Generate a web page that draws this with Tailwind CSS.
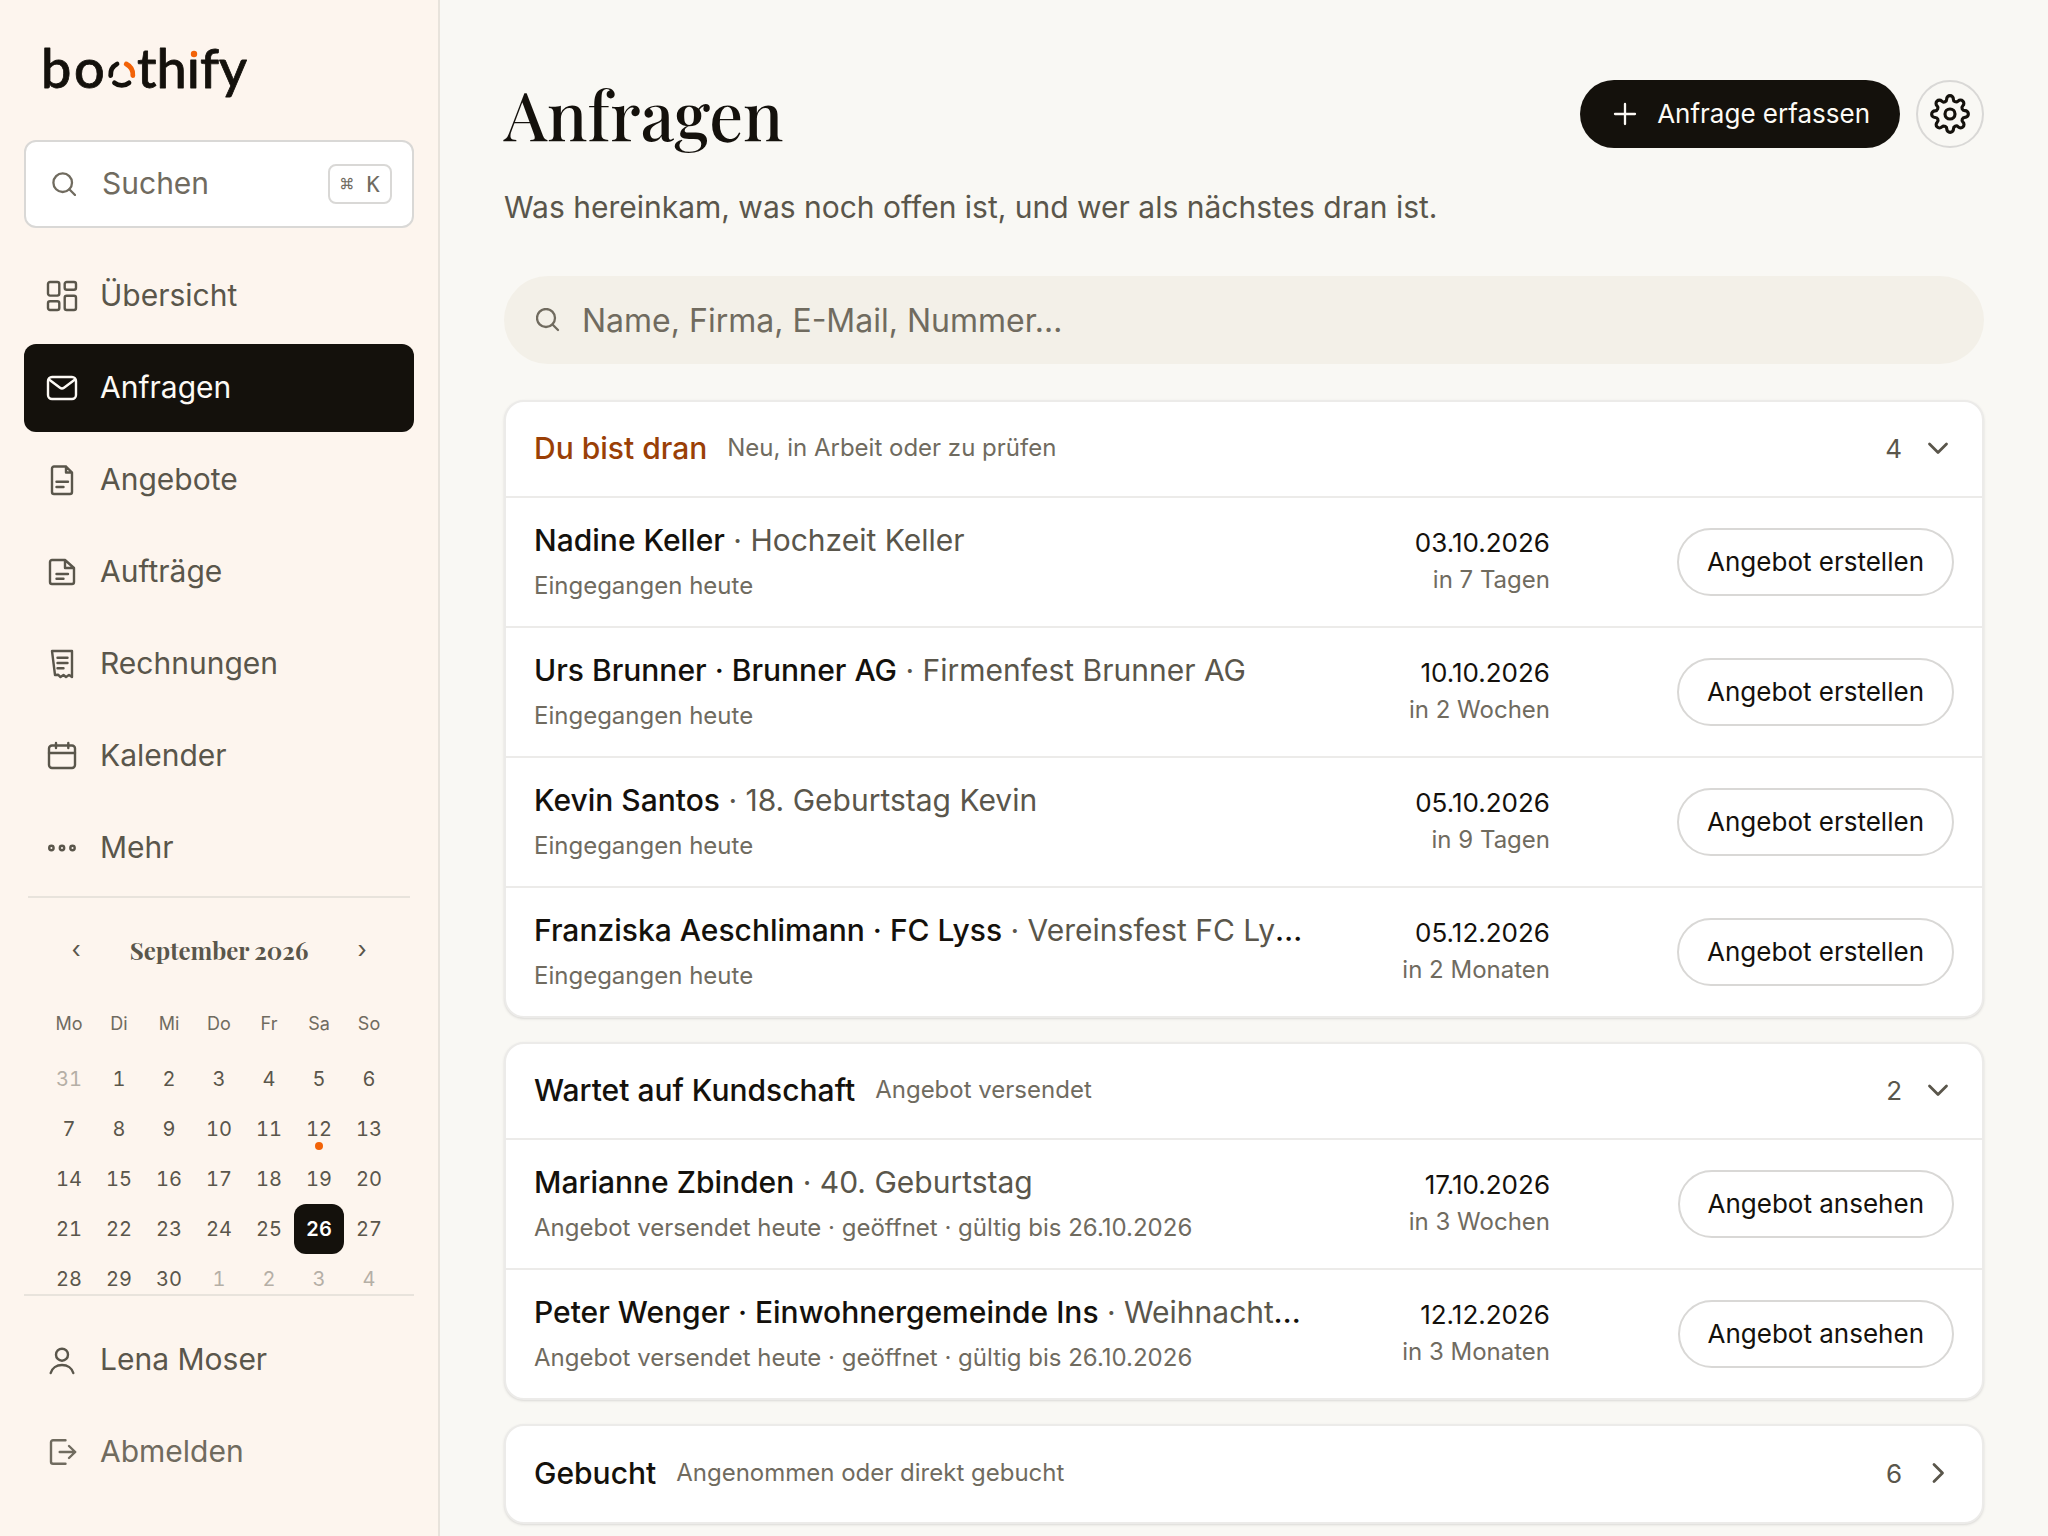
<!DOCTYPE html>
<html lang="de">
<head>
  <meta charset="UTF-8" />
  <meta name="viewport" content="width=device-width, initial-scale=1.0"/>
  <title>Anfragen – boothify</title>
  <script src="https://cdn.jsdelivr.net/npm/@tailwindcss/browser@4"></script>
</head>
<body class="flex h-screen overflow-hidden bg-[#f9f8f4] font-[Inter,sans-serif] text-[#14110c]">

  <!-- Sidebar -->
  <aside class="flex h-screen w-[440px] shrink-0 flex-col border-r-2 border-[#e8e3dc] bg-[#fdf5ee] px-6 text-[30px] text-[#5a564b]">
    <div class="flex min-h-0 flex-1 flex-col overflow-hidden">
      <a href="#" aria-label="boothify" class="block h-[140px] shrink-0 pt-8 pl-[17px]">
        <svg class="h-[72px] w-[220px]" viewBox="0 0 220 72" fill="none">
          <g class="font-[Lato,sans-serif] text-[54px] font-medium" fill="#14110c" stroke="#14110c" stroke-width="0.8" stroke-linejoin="round">
            <text x="0" y="56">b</text>
            <text x="33" y="56">o</text>
            <text x="96" y="56">thıfy</text>
          </g>
          <!-- Shutter ring -->
          <g stroke-width="4.8" stroke-linecap="round">
            <path stroke="#14110c" d="M76 32a12 12 0 0 0-6.300 11.500"/>
            <path stroke="#14110c" d="M73.500 50.800a11.500 11.500 0 0 0 14.500 0"/>
            <path stroke="#f26207" d="M85.300 32a12 12 0 0 1 6.500 11.500"/>
          </g>
          <circle cx="153" cy="22" r="3.200" fill="#f26207"/>
        </svg>
      </a>

      <button type="button" class="flex h-[88px] shrink-0 items-center rounded-xl border-2 border-[#d9d8d6] bg-white pr-5 pl-[26px] text-[#706b5f]">
        <svg class="size-6 shrink-0" viewBox="0 0 24 24" fill="none" stroke="currentColor" stroke-width="2.300" stroke-linecap="round"><circle cx="10.700" cy="10.700" r="9.300"/><path d="m17.300 17.300 5.700 5.700"/></svg>
        <span class="ml-[26px] pb-0.5">Suchen</span>
        <kbd class="ml-auto flex h-10 w-16 items-center justify-center rounded-lg border-2 border-[#d9d8d6] font-['DejaVu_Sans_Mono',monospace] text-[22px]">⌘ K</kbd>
      </button>

      <nav class="mt-6 flex shrink-0 flex-col gap-1">
        <a href="#" class="flex h-[88px] items-center gap-[22px] rounded-xl pl-[22px]">
          <svg class="size-8" viewBox="0 0 32 32" fill="none" stroke="currentColor" stroke-width="2.400"><rect x="2" y="2" width="11.300" height="13.600" rx="2"/><rect x="18.700" y="2" width="11.300" height="7.700" rx="2"/><rect x="2" y="21.300" width="11.300" height="8.700" rx="2"/><rect x="18.700" y="15.700" width="11.300" height="14.300" rx="2"/></svg>
          <span class="pb-0.5">Übersicht</span>
        </a>
        <a href="#" aria-current="page" class="flex h-[88px] items-center gap-[22px] rounded-xl bg-[#14110c] pl-[22px] text-[#fdfaf5]">
          <svg class="size-8" viewBox="0 0 32 32" fill="none" stroke="currentColor" stroke-width="2.400" stroke-linecap="round"><rect x="2" y="5" width="28" height="22" rx="4"/><path d="M3 7.500 14 15.700q2 1.500 4 0L29 7.500"/></svg>
          <span class="pb-0.5">Anfragen</span>
        </a>
        <a href="#" class="flex h-[88px] items-center gap-[22px] rounded-xl pl-[22px]">
          <svg class="size-8" viewBox="0 0 32 32" fill="none" stroke="currentColor" stroke-width="2.400" stroke-linecap="round" stroke-linejoin="round"><path d="M20 2.500H8a2 2 0 0 0-2 2V28a2 2 0 0 0 2 2h16a2 2 0 0 0 2-2V8.500zM20 2.500v6h6M10.500 17.700h11.500M10.500 23h7"/></svg>
          <span class="pb-0.5">Angebote</span>
        </a>
        <a href="#" class="flex h-[88px] items-center gap-[22px] rounded-xl pl-[22px]">
          <svg class="size-8" viewBox="0 0 32 32" fill="none" stroke="currentColor" stroke-width="2.400" stroke-linecap="round" stroke-linejoin="round"><path d="M19 4H6a2 2 0 0 0-2 2v20a2 2 0 0 0 2 2h20a2 2 0 0 0 2-2V12zM19 4v8h9M10.500 18h11.500M10.500 22.700h7"/></svg>
          <span class="pb-0.5">Aufträge</span>
        </a>
        <a href="#" class="flex h-[88px] items-center gap-[22px] rounded-xl pl-[22px]">
          <svg class="size-8" viewBox="0 0 32 32" fill="none" stroke="currentColor" stroke-width="2.400" stroke-linecap="round" stroke-linejoin="round"><path d="M6 3h20v26l-3-2-3 2-2.500-2-3 2-2.500-2.300L9 27zM11.500 9.700h10M11.500 15h10M11.500 20.300h6"/></svg>
          <span class="pb-0.5">Rechnungen</span>
        </a>
        <a href="#" class="flex h-[88px] items-center gap-[22px] rounded-xl pl-[22px]">
          <svg class="size-8" viewBox="0 0 32 32" fill="none" stroke="currentColor" stroke-width="2.400" stroke-linecap="round"><rect x="3" y="5.500" width="26" height="22.500" rx="3"/><path d="M3 13h26M10 3v5M22.300 3v5"/></svg>
          <span class="pb-0.5">Kalender</span>
        </a>
        <button type="button" class="flex h-[88px] items-center gap-[22px] rounded-xl pl-[22px]">
          <svg class="size-8" viewBox="0 0 32 32" fill="none" stroke="currentColor" stroke-width="2.400"><circle cx="5.400" cy="16" r="2.200"/><circle cx="16" cy="16" r="2.200"/><circle cx="26.500" cy="16" r="2.200"/></svg>
          <span class="pb-0.5">Mehr</span>
        </button>
      </nav>

      <!-- Mini calendar -->
      <div class="mx-1 mt-1 shrink-0 border-t-2 border-[#e8e3dc] px-4 pt-6">
        <div class="flex h-14 items-center justify-between px-5">
          <button type="button" aria-label="Vorheriger Monat" class="w-6 text-2xl">‹</button>
          <h2 class="font-['Playfair_Display','Liberation_Serif',serif] text-2xl font-bold">September 2026</h2>
          <button type="button" aria-label="Nächster Monat" class="w-6 text-2xl">›</button>
        </div>
        <table class="mt-4 w-[350px] table-fixed text-center text-xl tabular-nums">
          <thead>
            <tr class="h-[60px] text-lg text-[#706b5f]">
              <th class="font-normal">Mo</th><th class="font-normal">Di</th><th class="font-normal">Mi</th><th class="font-normal">Do</th><th class="font-normal">Fr</th><th class="font-normal">Sa</th><th class="font-normal">So</th>
            </tr>
          </thead>
          <tbody id="days"></tbody>
        </table>
      </div>
    </div>

    <div class="flex shrink-0 flex-col gap-1 border-t-2 border-[#e8e3dc] pt-5 pb-10">
      <a href="#" class="flex h-[88px] items-center gap-[22px] pl-[22px]">
        <svg class="size-8" viewBox="0 0 32 32" fill="none" stroke="currentColor" stroke-width="2.400" stroke-linecap="round"><circle cx="16" cy="10.700" r="6"/><path d="M4.700 29C6 24 10.500 21 16 21s10 3 11.300 8"/></svg>
        <span class="pb-0.5">Lena Moser</span>
      </a>
      <button type="button" class="flex h-[88px] items-center gap-[22px] pl-[22px] text-[#706b5f]">
        <svg class="size-8" viewBox="0 0 32 32" fill="none" stroke="currentColor" stroke-width="2.400" stroke-linecap="round" stroke-linejoin="round"><path d="M19.500 4.300H7a2 2 0 0 0-2 2v19.400a2 2 0 0 0 2 2h12.500M13.700 16h15.500M23 10l6.200 6-6.200 6"/></svg>
        <span class="pb-0.5">Abmelden</span>
      </button>
    </div>
  </aside>

  <!-- Inquiries -->
  <main class="min-w-0 flex-1 overflow-hidden px-16 pt-20">
    <header class="flex items-start justify-between">
      <div>
        <h1 class="font-['Playfair_Display','Liberation_Serif',serif] text-[67px] leading-[68px] font-medium">Anfragen</h1>
        <p class="mt-9 text-[30px] leading-[46px] text-[#5a564b]">Was hereinkam, was noch offen ist, und wer als nächstes dran ist.</p>
      </div>
      <div class="flex gap-4">
        <button type="button" class="flex h-[68px] items-center gap-5 rounded-full bg-[#14110c] pr-[30px] pl-[33px] text-[26px] text-[#fdfaf5]">
          <svg class="size-6" viewBox="0 0 24 24" fill="none" stroke="currentColor" stroke-width="2.300" stroke-linecap="round"><path d="M12 2v20M2 12h20"/></svg>
          <span class="pb-0.5">Anfrage erfassen</span>
        </button>
        <button type="button" aria-label="Einstellungen" class="flex size-[68px] items-center justify-center rounded-full border-2 border-[#d9d8d6]">
          <svg class="size-10" viewBox="0 0 24 24" fill="none" stroke="currentColor" stroke-width="1.900" stroke-linecap="round" stroke-linejoin="round"><circle cx="12" cy="12" r="3"/><path d="M19.400 15a1.650 1.650 0 0 0 .33 1.820l.06.06a2 2 0 0 1 0 2.830 2 2 0 0 1-2.830 0l-.06-.06a1.650 1.650 0 0 0-1.820-.33 1.650 1.650 0 0 0-1 1.510V21a2 2 0 0 1-2 2 2 2 0 0 1-2-2v-.09A1.650 1.650 0 0 0 9 19.400a1.650 1.650 0 0 0-1.820.33l-.06.06a2 2 0 0 1-2.830 0 2 2 0 0 1 0-2.830l.06-.06a1.650 1.650 0 0 0 .33-1.820 1.650 1.650 0 0 0-1.510-1H3a2 2 0 0 1-2-2 2 2 0 0 1 2-2h.09A1.650 1.650 0 0 0 4.600 9a1.650 1.650 0 0 0-.33-1.820l-.06-.06a2 2 0 0 1 0-2.830 2 2 0 0 1 2.830 0l.06.06a1.650 1.650 0 0 0 1.820.33H9a1.650 1.650 0 0 0 1-1.510V3a2 2 0 0 1 2-2 2 2 0 0 1 2 2v.09a1.650 1.650 0 0 0 1 1.510 1.650 1.650 0 0 0 1.820-.33l.06-.06a2 2 0 0 1 2.830 0 2 2 0 0 1 0 2.830l-.06.06a1.650 1.650 0 0 0-.33 1.820V9a1.650 1.650 0 0 0 1.510 1H21a2 2 0 0 1 2 2 2 2 0 0 1-2 2h-.09a1.650 1.650 0 0 0-1.510 1z"/></svg>
        </button>
      </div>
    </header>

    <label class="mt-[46px] flex h-[88px] items-center rounded-full bg-[#f3f0e8] px-8 text-[#706b5f]">
      <svg class="size-6 shrink-0" viewBox="0 0 24 24" fill="none" stroke="currentColor" stroke-width="2.300" stroke-linecap="round"><circle cx="10" cy="10" r="9"/><path d="m16.500 16.500 5.500 5.500"/></svg>
      <span class="sr-only">Anfragen durchsuchen</span>
      <input type="search" placeholder="Name, Firma, E-Mail, Nummer…" class="ml-[22px] min-w-0 flex-1 bg-transparent pt-0.5 text-[32px] outline-none placeholder:text-[#706b5f]" />
    </label>

    <div id="groups" class="mt-9 flex flex-col gap-6"></div>
  </main>

  <script>
    const groups = [
      { title: "Du bist dran", hint: "Neu, in Arbeit oder zu prüfen", count: 4, accent: true, action: "Angebot erstellen", rows: [
        ["Nadine Keller", "Hochzeit Keller", "Eingegangen heute", "03.10.2026", "in 7 Tagen"],
        ["Urs Brunner · Brunner AG", "Firmenfest Brunner AG", "Eingegangen heute", "10.10.2026", "in 2 Wochen"],
        ["Kevin Santos", "18. Geburtstag Kevin", "Eingegangen heute", "05.10.2026", "in 9 Tagen"],
        ["Franziska Aeschlimann · FC Lyss", "Vereinsfest FC Lyss", "Eingegangen heute", "05.12.2026", "in 2 Monaten"],
      ]},
      { title: "Wartet auf Kundschaft", hint: "Angebot versendet", count: 2, action: "Angebot ansehen", rows: [
        ["Marianne Zbinden", "40. Geburtstag", "Angebot versendet heute · geöffnet · gültig bis 26.10.2026", "17.10.2026", "in 3 Wochen"],
        ["Peter Wenger · Einwohnergemeinde Ins", "Weihnachtsessen", "Angebot versendet heute · geöffnet · gültig bis 26.10.2026", "12.12.2026", "in 3 Monaten"],
      ]},
      { title: "Gebucht", hint: "Angenommen oder direkt gebucht", count: 6, rows: [] },
    ];

    const row = ([name, event, status, date, due], action) => `
      <li class="grid h-[130px] grid-cols-[minmax(0,1fr)_198px_356px] items-center gap-12 border-b-2 border-[#ecebe9] px-7 last:h-32 last:border-b-0">
        <div class="pb-0.5">
          <p class="truncate text-[30px] leading-[46px] font-medium">${name}<span class="font-normal text-[#5a564b]"> · ${event}</span></p>
          <p class="mt-1 text-2xl leading-[38px] text-[#706b5f]">${status}</p>
        </div>
        <div class="pb-0.5 text-right">
          <p class="text-[26px] leading-[38px]">${date}</p>
          <p class="text-2xl leading-9 text-[#706b5f]">${due}</p>
        </div>
        <button type="button" class="h-[68px] justify-self-end rounded-full border-2 border-[#d9d8d6] px-7 pb-0.5 text-[26px]">${action}</button>
      </li>`;

    document.getElementById("groups").innerHTML = groups.map(g => `
      <section class="overflow-hidden rounded-[20px] border-2 border-[#ecebe9] bg-white shadow-sm">
        <button type="button" aria-expanded="${g.rows.length > 0}" class="flex h-24 w-full items-center pr-[30px] pb-0.5 pl-7 ${g.rows.length ? "border-b-2 border-[#ecebe9]" : ""}">
          <span class="text-[30px] font-medium ${g.accent ? "text-[#9a3f06]" : ""}">${g.title}</span>
          <span class="ml-5 text-2xl text-[#706b5f]">${g.hint}</span>
          <span class="ml-auto text-[26px] text-[#5a564b]">${g.count}</span>
          <svg class="ml-[22px] size-7 text-[#5a564b] ${g.rows.length ? "" : "-rotate-90"}" viewBox="0 0 28 28" fill="none" stroke="currentColor" stroke-width="2.800" stroke-linecap="round" stroke-linejoin="round"><path d="m5.500 10 8.500 8.500 8.500-8.500"/></svg>
        </button>
        <ul>${g.rows.map(r => row(r, g.action)).join("")}</ul>
      </section>`).join("");

    // September 2026, weeks start on Monday
    const today = 26, booked = 12;
    let html = "";
    for (let week = 0; week < 5; week++) {
      html += `<tr class="h-[50px]">`;
      for (let d = 0; d < 7; d++) {
        const n = week * 7 + d;
        const day = n === 0 ? 31 : n > 30 ? n - 30 : n;
        const outside = n === 0 || n > 30;
        const look = outside ? "text-[#b5afa6]" : day === today ? "rounded-xl bg-[#14110c] font-semibold text-white" : "";
        const dot = !outside && day === booked ? `<span class="absolute bottom-1 left-1/2 size-2 -translate-x-1/2 rounded-full bg-[#f26207]"></span>` : "";
        html += `<td class="p-0"><button type="button" class="relative block size-[50px] ${look}">${day}${dot}</button></td>`;
      }
      html += "</tr>";
    }
    document.getElementById("days").innerHTML = html;
  </script>
</body>
</html>
